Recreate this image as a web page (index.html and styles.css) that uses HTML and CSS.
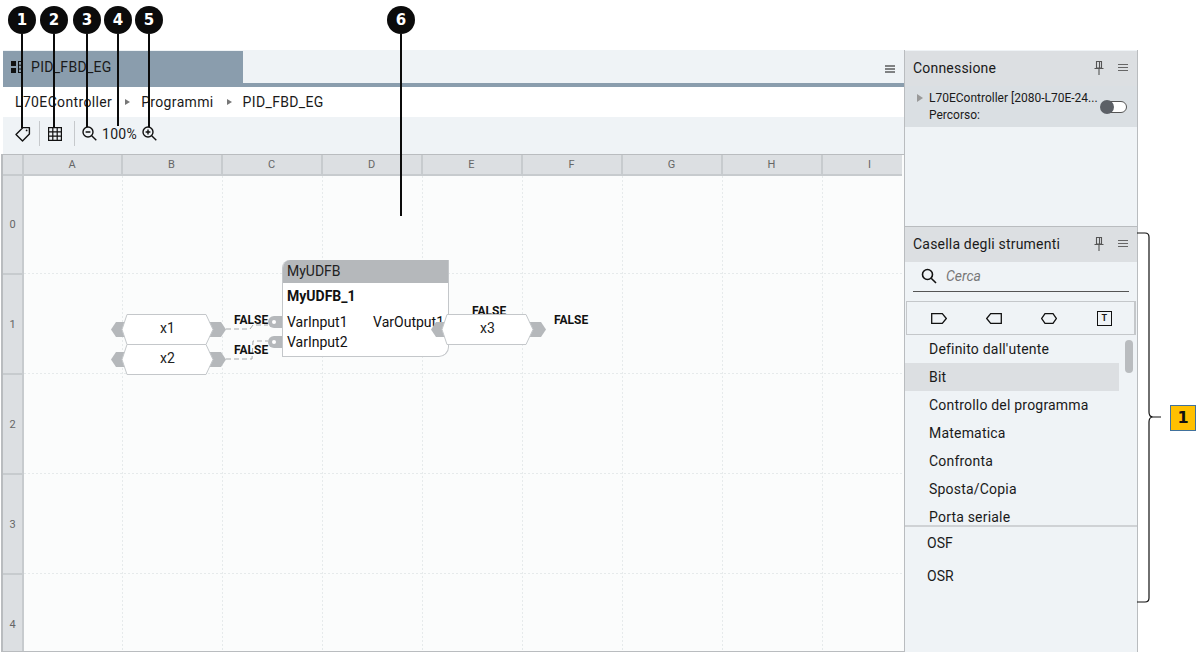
FILE: index.html
```html
<!doctype html>
<html lang="en">
  <head>
    <meta charset="UTF-8" />
    <title>PID_FBD_EG</title>
    <link rel="stylesheet" href="styles.css">
  </head>
  <body>
    <div class="app">
      <main class="editor">
        <div class="tabbar">
          <div class="tab">
            <svg class="tab-icon" width="12" height="12" viewBox="0 0 12 12">
              <rect x="0" y="0" width="5" height="5" fill="#111" />
              <rect x="0" y="7" width="5" height="5" fill="#111" />
              <rect x="7.500" y="0.5" width="4" height="11" fill="none" stroke="#111" />
              <path d="M7.500 4.200h4M7.500 8h4" stroke="#111" />
            </svg>
            <span>PID_FBD_EG</span>
          </div>
          <svg class="menu-icon" width="10" height="8" viewBox="0 0 10 8">
            <path d="M0 1h10M0 4h10M0 7h10" stroke="#111" />
          </svg>
        </div>

        <nav class="breadcrumb">
          <span>L70EController</span>
          <i class="crumb-arrow"></i>
          <span>Programmi</span>
          <i class="crumb-arrow"></i>
          <span>PID_FBD_EG</span>
        </nav>

        <div class="toolbar">
          <svg class="tool tool-tag" width="16" height="16" viewBox="0 0 16 16">
            <path d="M1 8.500 8 1.600h6.400V8L7.500 14.900z" fill="none" stroke="#111" stroke-width="1.400" stroke-linejoin="round" />
            <circle cx="11.600" cy="4.400" r="0.900" fill="#111" />
          </svg>
          <i class="tool-sep"></i>
          <svg class="tool tool-grid" width="14" height="14" viewBox="0 0 14 14">
            <path d="M.6.6h12.800v12.800H.6zM.6 4.800h12.800M.6 9.200h12.800M4.800.6v12.800M9.200.6v12.800" fill="none" stroke="#111" stroke-width="1.200" />
          </svg>
          <i class="tool-sep"></i>
          <svg class="tool tool-out" width="15" height="15" viewBox="0 0 15 15">
            <circle cx="6" cy="6" r="5" fill="none" stroke="#111" stroke-width="1.400" />
            <path d="M3.600 6h4.800M9.700 9.700l4.600 4.600" stroke="#111" stroke-width="1.400" />
          </svg>
          <span class="zoom-value">100%</span>
          <svg class="tool tool-in" width="15" height="15" viewBox="0 0 15 15">
            <circle cx="6" cy="6" r="5" fill="none" stroke="#111" stroke-width="1.400" />
            <path d="M3.600 6h4.800M6 3.600v4.800M9.700 9.700l4.600 4.600" stroke="#111" stroke-width="1.400" />
          </svg>
        </div>

        <div class="sheet">
          <div class="corner"></div>
          <div class="col-head">A</div>
          <div class="col-head">B</div>
          <div class="col-head">C</div>
          <div class="col-head">D</div>
          <div class="col-head">E</div>
          <div class="col-head">F</div>
          <div class="col-head">G</div>
          <div class="col-head">H</div>
          <div class="col-head">I</div>

          <div class="row-head">0</div>
          <div class="row-head">1</div>
          <div class="row-head">2</div>
          <div class="row-head">3</div>
          <div class="row-head">4</div>

          <div class="plane">
            <svg class="plane-lines" width="100%" height="100%">
              <defs>
                <pattern id="cell" x="0" y="0" width="100" height="100" patternUnits="userSpaceOnUse">
                  <path d="M98.500 0v100M0 97.500h100" stroke="#e6eaeb" stroke-dasharray="2 2" />
                </pattern>
              </defs>
              <rect width="100%" height="100%" fill="url(#cell)" />
            </svg>

            <!-- wires -->
            <svg class="wires" width="260" height="80" viewBox="0 125 260 80">
              <path d="M202 153h24l3-4h15M202 183h26l1-18h15" fill="none" stroke="#a5a8aa" stroke-dasharray="5 3" />
            </svg>

            <span class="value value-x1">FALSE</span>
            <span class="value value-x2">FALSE</span>
            <span class="value value-in">FALSE</span>
            <span class="value value-out">FALSE</span>

            <i class="pin pin-1"></i>
            <i class="pin pin-2"></i>

            <div class="block">
              <div class="block-type">MyUDFB</div>
              <div class="block-name">MyUDFB_1</div>
              <div class="block-ports">
                <span>VarInput1</span>
                <span>VarOutput1</span>
              </div>
              <div class="block-ports">
                <span>VarInput2</span>
              </div>
            </div>

            <div class="tag tag-x1">
              <svg width="116" height="31" viewBox="0 0 116 31">
                <path d="M15 8H5L0 15.500 5 23h10z" fill="#b5b8bb" />
                <path d="M95 8h15l5 7.500-5 7.500H95z" fill="#b5b8bb" />
                <path d="M16 .5h79l7 15-7 15H16l-5-15z" fill="#fff" stroke="#c4c7ca" />
              </svg>
              <span>x1</span>
            </div>
            <div class="tag tag-x2">
              <svg width="116" height="31" viewBox="0 0 116 31">
                <path d="M15 8H5L0 15.500 5 23h10z" fill="#b5b8bb" />
                <path d="M95 8h15l5 7.500-5 7.500H95z" fill="#b5b8bb" />
                <path d="M16 .5h79l7 15-7 15H16l-5-15z" fill="#fff" stroke="#c4c7ca" />
              </svg>
              <span>x2</span>
            </div>
            <div class="tag tag-x3">
              <svg width="116" height="31" viewBox="0 0 116 31">
                <path d="M15 8H5L0 15.500 5 23h10z" fill="#b5b8bb" />
                <path d="M95 8h15l5 7.500-5 7.500H95z" fill="#b5b8bb" />
                <path d="M16 .5h79l7 15-7 15H16l-5-15z" fill="#fff" stroke="#c4c7ca" />
              </svg>
              <span>x3</span>
            </div>
          </div>
        </div>
      </main>

      <aside class="sidebar">
        <section class="panel panel-connection">
          <header class="panel-head">
            <h2>Connessione</h2>
            <svg class="pin-icon" width="10" height="14" viewBox="0 0 10 14">
              <path d="M2.500.5h5v6.500h-5zM.5 7.500h9M5 8v6M5.500 1v6" fill="none" stroke="#555" stroke-width="1.100" />
            </svg>
            <svg class="menu-icon" width="10" height="7" viewBox="0 0 10 7">
              <path d="M0 .5h10M0 3.500h10M0 6.500h10" stroke="#666" />
            </svg>
          </header>
          <div class="controller">
            <i class="controller-arrow"></i>
            <div class="controller-text">
              <div>L70EController [2080-L70E-24...</div>
              <div>Percorso:</div>
            </div>
            <div class="toggle"><i class="toggle-knob"></i></div>
          </div>
        </section>

        <section class="panel panel-toolbox">
          <header class="panel-head">
            <h2>Casella degli strumenti</h2>
            <svg class="pin-icon" width="10" height="14" viewBox="0 0 10 14">
              <path d="M2.500.5h5v6.500h-5zM.5 7.500h9M5 8v6M5.500 1v6" fill="none" stroke="#555" stroke-width="1.100" />
            </svg>
            <svg class="menu-icon" width="10" height="7" viewBox="0 0 10 7">
              <path d="M0 .5h10M0 3.500h10M0 6.500h10" stroke="#666" />
            </svg>
          </header>
          <div class="search">
            <svg width="16" height="16" viewBox="0 0 16 16">
              <circle cx="6.500" cy="6.500" r="5" fill="none" stroke="#111" stroke-width="1.600" />
              <path d="M10.200 10.200 15 15" stroke="#111" stroke-width="1.600" />
            </svg>
            <span>Cerca</span>
          </div>
          <div class="palette">
            <svg width="16" height="11" viewBox="0 0 16 11"><path d="M.7.7h10.600l4 4.800-4 4.800H.7z" fill="none" stroke="#111" stroke-width="1.300" /></svg>
            <svg width="16" height="11" viewBox="0 0 16 11"><path d="M15.300.7H4.700l-4 4.800 4 4.800h10.600z" fill="none" stroke="#111" stroke-width="1.300" /></svg>
            <svg width="16" height="11" viewBox="0 0 16 11"><path d="M4 .7h8l3.300 4.800-3.300 4.800H4L.7 5.500z" fill="none" stroke="#111" stroke-width="1.300" /></svg>
            <div class="palette-text">T</div>
          </div>
          <div class="categories">
            <ul class="category-list">
              <li>Definito dall'utente</li>
              <li class="is-active">Bit</li>
              <li>Controllo del programma</li>
              <li>Matematica</li>
              <li>Confronta</li>
              <li>Sposta/Copia</li>
              <li>Porta seriale</li>
            </ul>
            <i class="scroll-thumb"></i>
          </div>
          <ul class="instructions">
            <li>OSF</li>
            <li>OSR</li>
          </ul>
        </section>
      </aside>
    </div>

    <!-- callouts drawn over the screenshot -->
    <div class="callout" style="--x: 22px; --len: 94px">1</div>
    <div class="callout" style="--x: 54px; --len: 94px">2</div>
    <div class="callout" style="--x: 87px; --len: 93px">3</div>
    <div class="callout" style="--x: 118px; --len: 92px">4</div>
    <div class="callout" style="--x: 149px; --len: 93px">5</div>
    <div class="callout" style="--x: 401px; --len: 182px">6</div>

    <svg class="bracket" width="24" height="372" viewBox="0 0 24 372">
      <path d="M0 1h8q4 0 4 4v175q0 5 4 5h8M16 185q-4 0-4 5v176q0 4-4 4H0" fill="none" stroke="#111" stroke-width="1.200" />
    </svg>
    <div class="badge">1</div>
  </body>
</html>
```

FILE: styles.css
```css
:root {
  --panel: #eff3f6;
  --head: #dcdfe2;
  --line: #b9bcbf;
  --slate: #8a9dad;
  --block: #b5b8bb;
}

* {
  margin: 0;
  padding: 0;
  box-sizing: border-box;
}

body {
  position: relative;
  width: 1204px;
  height: 652px;
  overflow: hidden;
  background: white;
  color: #1a1a1a;
  font-family: "Roboto", "Liberation Sans", sans-serif;
  font-size: 14px;
  padding: 50px 0 0 1px;
}

.app {
  display: flex;
  width: 1137px;
  height: 602px;
}

/* editor */

.editor {
  display: flex;
  flex-direction: column;
  width: 903px;
  height: 100%;
}

.tabbar {
  display: flex;
  align-items: flex-end;
  justify-content: space-between;
  height: 37px;
  margin-left: 2px;
  padding-right: 9px;
  background: var(--panel);
  border-bottom: 4px solid var(--slate);
}

.tab {
  display: flex;
  align-items: center;
  gap: 8px;
  width: 240px;
  height: 32px;
  padding: 0 0 1px 8px;
  background: var(--slate);
  letter-spacing: 0.3px;
}

.tabbar .menu-icon {
  margin-bottom: 10px;
}

.breadcrumb {
  display: flex;
  align-items: center;
  height: 30px;
  margin-left: 2px;
  padding-left: 12px;
  letter-spacing: 0.35px;
  background: white;
}

.crumb-arrow {
  width: 0;
  height: 0;
  margin: 0 11px 0 13px;
  border-left: 5px solid #777;
  border-top: 3.5px solid transparent;
  border-bottom: 3.5px solid transparent;
}

.toolbar {
  display: flex;
  align-items: center;
  height: 37px;
  margin-left: 2px;
  padding: 0 0 4px 12px;
  background: var(--panel);
}

.tool-sep {
  width: 1px;
  height: 25px;
  margin: 0 8px;
  background: #c6c9cc;
}

.tool-grid {
  margin-right: 4px;
}

.tool-out {
  margin-left: -1px;
}

.zoom-value {
  margin: 0 5px;
  letter-spacing: 0.3px;
}

.sheet {
  position: relative;
  flex: 1;
  min-height: 0;
  display: grid;
  grid-template-columns: 21px 99px repeat(8, 100px);
  grid-template-rows: 21px 99px repeat(4, 100px);
  overflow: hidden;
  background: #fbfcfc;
  border-left: 2px solid var(--line);
  border-bottom: 1px solid var(--line);
  border-top: 1px solid var(--line);
  color: #666;
  font-size: 11px;
}

.corner,
.col-head,
.row-head {
  display: flex;
  align-items: center;
  justify-content: center;
  background: var(--head);
  border-right: 2px solid #c7cbce;
  border-bottom: 2px solid #c7cbce;
}

.col-head {
  padding-right: 1px;
}

.col-head:nth-child(10) {
  width: 79px;
  justify-content: flex-start;
  padding: 0 0 0 45px;
  border-right: none;
}

.row-head {
  grid-column: 1;
}

.plane {
  grid-column: 2 / -1;
  grid-row: 2 / -1;
  position: relative;
  color: #111;
}

.plane-lines {
  position: absolute;
  left: 0;
  top: 0;
}

/* diagram, coordinates are the canvas itself */

.wires {
  position: absolute;
  left: 0;
  top: 125px;
}

.value {
  position: absolute;
  font-size: 12px;
  font-weight: 700;
  line-height: 14px;
}

.value-x1 { left: 210px; top: 137px; }
.value-x2 { left: 210px; top: 167px; }
.value-in { left: 448px; top: 128px; }
.value-out { left: 530px; top: 137px; }

.pin {
  position: absolute;
  left: 244px;
  width: 15px;
  height: 12px;
  border-radius: 6px 0 0 6px;
  background: var(--block);
}

.pin::after {
  content: "";
  position: absolute;
  left: 4px;
  top: 4px;
  width: 4px;
  height: 4px;
  border-radius: 50%;
  background: white;
}

.pin-1 { top: 140px; }
.pin-2 { top: 160px; }

.block {
  position: absolute;
  left: 258px;
  top: 84px;
  width: 167px;
  height: 97px;
  background: white;
  border: 1px solid #c4c7ca;
  border-top: none;
  border-radius: 8px 0 10px 0;
  font-size: 14px;
  overflow: hidden;
}

.block-type {
  height: 23px;
  padding-left: 4px;
  line-height: 23px;
  background: var(--block);
  color: #222;
}

.block-name {
  padding: 5px 0 0 4px;
  height: 29px;
  font-weight: 700;
  line-height: 17px;
}

.block-ports {
  display: flex;
  justify-content: space-between;
  height: 20px;
  padding-left: 4px;
  line-height: 20px;
  white-space: nowrap;
}

.block-ports span + span {
  margin-right: 4px;
}

.tag {
  position: absolute;
  width: 116px;
  height: 31px;
  font-size: 14px;
}

.tag svg {
  display: block;
}

.tag span {
  position: absolute;
  left: 0;
  width: 113px;
  top: 5px;
  text-align: center;
  line-height: 18px;
  color: #222;
}

.tag-x1 { left: 87px; top: 138px; }
.tag-x2 { left: 87px; top: 168px; }
.tag-x3 { left: 407px; top: 138px; }

/* sidebar */

.sidebar {
  display: flex;
  flex-direction: column;
  width: 234px;
  height: 100%;
  background: var(--panel);
  border-left: 1px solid var(--line);
  border-right: 1px solid var(--line);
}

.panel-head {
  display: flex;
  align-items: center;
  height: 35px;
  padding: 0 9px 2px 8px;
  background: var(--head);
}

.panel-head h2 {
  flex: 1;
  font-size: 14px;
  font-weight: 400;
  letter-spacing: 0.2px;
}

.pin-icon {
  margin-right: 14px;
}

.panel-connection {
  height: 176px;
  margin-top: 1px;
  border-bottom: 1px solid var(--line);
}

.controller {
  position: relative;
  display: flex;
  height: 41px;
  padding: 5px 0 0 12px;
  background: #dadfe3;
  font-size: 12px;
  line-height: 17px;
}

.controller-arrow {
  width: 0;
  height: 0;
  margin: 3px 6px 0 0;
  border-left: 6px solid #999;
  border-top: 4px solid transparent;
  border-bottom: 4px solid transparent;
}

.controller-text {
  white-space: nowrap;
  margin-top: -1px;
}

.toggle {
  position: absolute;
  right: 10px;
  top: 15px;
  width: 23px;
  height: 12px;
  background: white;
  border: 1px solid #555;
  border-radius: 6px;
}

.toggle-knob {
  position: absolute;
  left: -5px;
  top: -2px;
  width: 14px;
  height: 14px;
  border-radius: 50%;
  background: #5c6066;
}

.search {
  display: flex;
  align-items: center;
  gap: 9px;
  height: 30px;
  margin: 0 8px;
  border-bottom: 1px solid #555;
  padding: 0 0 2px 8px;
  color: #777;
  font-style: italic;
}

.palette {
  display: grid;
  grid-template-columns: repeat(4, 55.25px);
  align-items: center;
  justify-items: center;
  height: 34px;
  margin: 9px 1px 0;
  padding-left: 4px;
  border: 1px solid #c4c7ca;
  border-right-width: 2px;
}

.palette-text {
  width: 15px;
  height: 15px;
  border: 1.5px solid #111;
  font-size: 9px;
  font-weight: 700;
  line-height: 12px;
  text-align: center;
}

.categories {
  position: relative;
  height: 192px;
  overflow: hidden;
  border-bottom: 2px solid #cfd2d5;
}

.category-list {
  list-style: none;
  padding-right: 18px;
}

.category-list li {
  height: 28px;
  padding-left: 24px;
  line-height: 28px;
  letter-spacing: 0.2px;
}

.category-list .is-active {
  background: var(--head);
}

.scroll-thumb {
  position: absolute;
  right: 4px;
  top: 5px;
  width: 8px;
  height: 33px;
  border-radius: 4px;
  background: #b9bcbf;
}

.instructions {
  list-style: none;
  padding-left: 22px;
}

.instructions li {
  height: 33px;
  line-height: 33px;
}

/* callouts */

.callout {
  position: absolute;
  left: calc(var(--x) - 14px);
  top: 6px;
  width: 28px;
  height: 28px;
  border-radius: 50%;
  background: #0b0b0b;
  color: white;
  font-family: "DejaVu Sans", sans-serif;
  font-size: 15px;
  font-weight: 700;
  line-height: 28px;
  text-align: center;
}

.callout::after {
  content: "";
  position: absolute;
  left: 13px;
  top: 28px;
  width: 2px;
  height: var(--len);
  background: #0b0b0b;
}

.bracket {
  position: absolute;
  left: 1137px;
  top: 232px;
}

.badge {
  position: absolute;
  left: 1170px;
  top: 405px;
  width: 26px;
  height: 26px;
  background: #ffc000;
  border: 1px solid #41719c;
  color: #111;
  font-family: "DejaVu Sans", sans-serif;
  font-size: 16px;
  font-weight: 700;
  line-height: 24px;
  text-align: center;
}
```
